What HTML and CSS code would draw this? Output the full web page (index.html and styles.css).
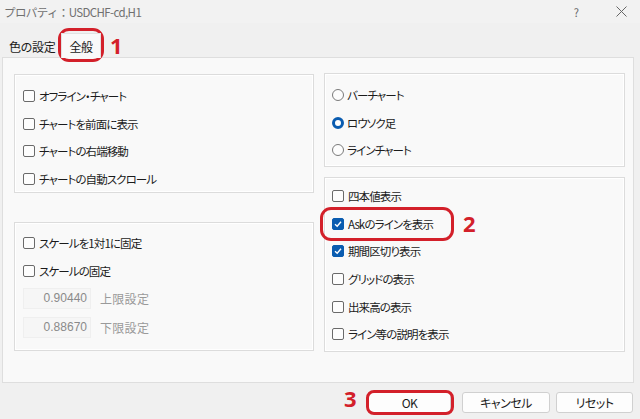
FILE: index.html
```html
<!DOCTYPE html>
<html lang="ja">
<head>
<meta charset="utf-8">
<link rel="stylesheet" href="styles.css">
</head>
<body>
<div class="window">
  <div class="titlebar">
    <span class="title">プロパティ：USDCHF-cd,H1</span>
    <span class="tb-help">?</span>
    <svg class="tb-close" width="11" height="11" viewBox="0 0 11 11"><path d="M0.5 0.5 L10.5 10.5 M10.5 0.5 L0.5 10.5" stroke="#666" stroke-width="1"/></svg>
  </div>
  <div class="tabs">
    <div class="tab">色の設定</div>
    <div class="tab active">全般</div>
  </div>
  <div class="panel">
    <div class="col">
      <div class="group g-l1">
        <label class="row"><span class="cb"></span>オフライン・チャート</label>
        <label class="row"><span class="cb"></span>チャートを前面に表示</label>
        <label class="row"><span class="cb"></span>チャートの右端移動</label>
        <label class="row"><span class="cb"></span>チャートの自動スクロール</label>
      </div>
      <div class="group g-l2">
        <label class="row"><span class="cb"></span>スケールを1対1に固定</label>
        <label class="row"><span class="cb"></span>スケールの固定</label>
        <div class="inrow"><span class="num">0.90440</span><span class="dis">上限設定</span></div>
        <div class="inrow"><span class="num">0.88670</span><span class="dis">下限設定</span></div>
      </div>
    </div>
    <div class="col">
      <div class="group g-r1">
        <label class="row"><span class="rb"></span>バーチャート</label>
        <label class="row"><span class="rb on"></span>ロウソク足</label>
        <label class="row"><span class="rb"></span>ラインチャート</label>
      </div>
      <div class="group g-r2">
        <label class="row"><span class="cb"></span>四本値表示</label>
        <label class="row"><span class="cb on"><svg width="10" height="10" viewBox="0 0 10 10"><path d="M2 5.2 L4.2 7.2 L8 2.8" fill="none" stroke="#fff" stroke-width="1.4"/></svg></span>Askのラインを表示</label>
        <label class="row"><span class="cb on"><svg width="10" height="10" viewBox="0 0 10 10"><path d="M2 5.2 L4.2 7.2 L8 2.8" fill="none" stroke="#fff" stroke-width="1.4"/></svg></span>期間区切り表示</label>
        <label class="row"><span class="cb"></span>グリッドの表示</label>
        <label class="row"><span class="cb"></span>出来高の表示</label>
        <label class="row"><span class="cb"></span>ライン等の説明を表示</label>
      </div>
    </div>
  </div>
  <div class="footer">
    <button class="btn ok">OK</button>
    <button class="btn cancel">キャンセル</button>
    <button class="btn reset">リセット</button>
  </div>

  <div class="mark m1"></div><span class="num-mark n1">1</span>
  <div class="mark m2"></div><span class="num-mark n2">2</span>
  <div class="mark m3"></div><span class="num-mark n3">3</span>
</div>
</body>
</html>
```
FILE: styles.css
```css
* { box-sizing: border-box; }
html, body { margin: 0; padding: 0; }
body {
  width: 640px;
  height: 419px;
  overflow: hidden;
  background: #f0f0f0;
  font-family: "Noto Sans CJK JP", "Noto Sans", sans-serif;
  font-size: 12px;
  color: #1b1b1b;
  font-feature-settings: "palt" 1;
}
.window { position: relative; width: 640px; height: 419px; background: #f0f0f0; }

.titlebar {
  height: 23px;
  display: flex;
  align-items: center;
  padding-left: 4px;
  background: #f2f2f2;
  color: #707070;
}
.title { font-size: 11.5px; letter-spacing: -0.6px; font-feature-settings: normal; }
.tb-help { margin-left: auto; font-size: 11px; color: #666; margin-right: 37px; }
.tb-close { margin-right: 13px; }

.tabs {
  height: 34px;
  display: flex;
  align-items: flex-end;
  padding-left: 6px;
}
.tab {
  height: 22px;
  padding: 0 3px;
  display: flex;
  align-items: center;
  font-size: 12px;
  color: #1b1b1b;
  letter-spacing: -0.3px;
}
.tab.active {
  height: 25px;
  background: #f9f9f9;
  border: 1px solid #e2e2e2;
  border-bottom: none;
  padding: 0 7px;
  margin-left: 3px;
  margin-bottom: -1px;
  position: relative;
  z-index: 1;
}

.panel {
  margin-left: 2px;
  width: 632px;
  height: 326px;
  background: #f9f9f9;
  border: 1px solid #dedede;
  padding: 16px 0 0 11px;
  display: grid;
  grid-template-columns: 300px 301px;
  column-gap: 10px;
  align-items: start;
}
.col { display: flex; flex-direction: column; }
.group {
  background: #f9f9f9;
  border: 1px solid #dcdcdc;
  box-shadow: inset 0 0 0 1px #ffffff;
  padding: 7px 0 0 8px;
}
.g-l1 { height: 119px; }
.g-l2 { height: 129px; margin-top: 29px; padding-top: 6px; }
.g-r1 { height: 94px; margin-top: -1px; padding-left: 7px; }
.g-r2 { height: 175px; margin-top: 10px; padding-top: 4px; padding-left: 7px; }

.row {
  height: 27.7px;
  display: flex;
  align-items: center;
  white-space: nowrap;
  font-size: 11.5px;
  letter-spacing: -0.9px;
}
.cb {
  width: 12px;
  height: 12px;
  border: 1px solid #6a6a6a;
  border-radius: 2px;
  background: #fdfdfd;
  margin-right: 4px;
  flex: none;
  display: flex;
  align-items: center;
  justify-content: center;
}
.cb.on { background: #0a5cb0; border-color: #0a5cb0; }
.rb {
  width: 12px;
  height: 12px;
  border: 1px solid #7a7a7a;
  border-radius: 50%;
  background: #fdfdfd;
  margin-right: 3px;
  flex: none;
}
.rb.on { border: 3.5px solid #0a5cb0; background: #fff; }

.inrow {
  height: 29px;
  display: flex;
  align-items: center;
}
.num {
  width: 68px;
  height: 21px;
  background: #f6f6f6;
  border: 1px solid #efefef;
  color: #8a8a8a;
  text-align: right;
  padding-right: 3px;
  line-height: 19px;
  font-family: "Liberation Sans", "Noto Sans", sans-serif;
  font-size: 12px;
}
.dis { color: #9a9a9a; margin-left: 9px; font-size: 12px; letter-spacing: 0.3px; }

.footer {
  height: 36px;
  display: flex;
  align-items: center;
  padding-top: 2px;
  padding-left: 368px;
}
.btn {
  height: 21px;
  background: #fdfdfd;
  border: 1px solid #d0d0d0;
  border-radius: 3px;
  font-family: "Noto Sans CJK JP", "Noto Sans", sans-serif;
  font-feature-settings: "palt" 1;
  font-size: 12px;
  letter-spacing: -0.5px;
  color: #1b1b1b;
  padding: 0;
  line-height: 19px;
}
.ok { width: 83px; }
.cancel { width: 88px; margin-left: 11px; }
.reset { width: 77px; margin-left: 6px; }

.mark {
  position: absolute;
  border: 3px solid #d3202a;
  border-radius: 11px;
}
.m1 { left: 58px; top: 28px; width: 46px; height: 34px; }
.m2 { left: 320px; top: 207px; width: 134px; height: 34px; }
.m3 { left: 366px; top: 390px; width: 88px; height: 25px; border-radius: 8px; }
.num-mark {
  position: absolute;
  color: #d3202a;
  font-family: "Open Sans", "Noto Sans", sans-serif;
  font-weight: 700;
  font-size: 22px;
  line-height: 1;
}
.n1 { left: 110px; top: 34px; }
.n2 { left: 463px; top: 212px; }
.n3 { left: 344px; top: 387px; }
```
